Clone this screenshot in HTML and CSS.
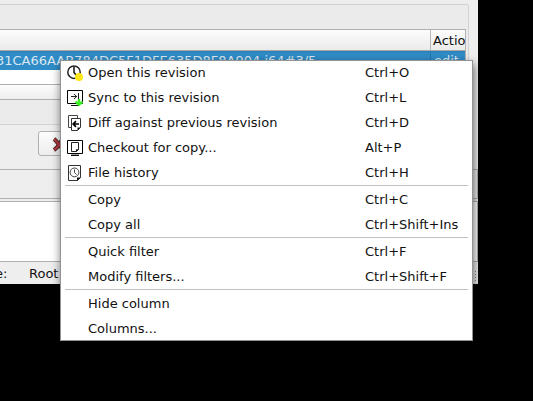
FILE: index.html
```
<!DOCTYPE html>
<html lang="en">
<head>
<meta charset="utf-8">
<title>Revisions</title>
<link rel="stylesheet" href="styles.css">
</head>
<body>
<div class="window">
  <section class="group">
    <div class="table">
      <div class="row header"><div class="cell file"></div><div class="cell action">Actio</div></div>
      <div class="row selected"><div class="cell file">31CA66AAB784DC5F1DFE635D8F8A904.i64#3/5</div><div class="cell action">edit</div></div>
      <div class="blank"></div>
      <div class="scrollbar"></div>
    </div>
  </section>
  <div class="buttons">
    <button class="button"><svg width="14" height="16" viewBox="0 0 14 16"><path d="M2 2C5 4 7 9 12 13M11 2C8 5 7 10 2 13" fill="none" stroke="#402020" stroke-width="4"/><path d="M2 2C5 4 7 9 12 13M11 2C8 5 7 10 2 13" fill="none" stroke="#b83b40" stroke-width="2.4"/></svg></button>
  </div>
  <div class="tabs"></div>
  <div class="log"></div>
  <footer class="status"><span>e:</span><span class="root">Root</span><i class="grip"></i></footer>
</div>
<nav class="menu">
  <div class="item"><svg class="icon" viewBox="0 0 16 16"><circle cx="7" cy="7.2" r="6.2" fill="#fff" stroke="#222" stroke-width="1.5"/><path d="M7 2V7.5L9.5 10.5" fill="none" stroke="#111" stroke-width="1.5"/><circle cx="12" cy="12" r="4" fill="#ffe714"/></svg><span>Open this revision</span><kbd>Ctrl+O</kbd></div>
  <div class="item"><svg class="icon" viewBox="0 0 16 16"><path d="M.5.5h15v13H.5z" fill="#fff" stroke="#000"/><path d="M4 15.5h8" stroke="#111"/><path d="M4 6.5h6M7 4l2.7 2.5L7 9M11.5 3v7" fill="none" stroke="#222"/><path d="M12 9v6M8.5 11.5l3.5 3.3 3.5-3.3" fill="none" stroke="#37ef20" stroke-width="2.4"/></svg><span>Sync to this revision</span><kbd>Ctrl+L</kbd></div>
  <div class="item"><svg class="icon" viewBox="0 0 16 16"><path d="M1.5.5h9v12h-9z" fill="#fff" stroke="#444"/><path d="M4.5 3.5h9v9l-3 3h-6z" fill="#fff" stroke="#333"/><path d="M10.5 15.5v-3h3z" fill="#111"/><path d="M12 9H6.5M9 6.2L6.2 9 9 11.8" fill="none" stroke="#000" stroke-width="1.7"/></svg><span>Diff against previous revision</span><kbd>Ctrl+D</kbd></div>
  <div class="item"><svg class="icon" viewBox="0 0 16 16"><path d="M.5.5h15v13H.5z" fill="#fff" stroke="#000"/><path d="M4 15.3h8" stroke="#111" stroke-width="1.4"/><path d="M4.5 2.5h7v7l-2 2h-5z" fill="#fff" stroke="#222"/><path d="M9 12V9.3h3z" fill="#111"/></svg><span>Checkout for copy...</span><kbd>Alt+P</kbd></div>
  <div class="item"><svg class="icon" viewBox="0 0 16 16"><path d="M1.5.5h12v12l-3 3h-9z" fill="#fff" stroke="#333"/><path d="M10 16v-3.6h4z" fill="#111"/><circle cx="7.5" cy="7.4" r="4.4" fill="#fff" stroke="#444"/><path d="M7.5 4.5v3l2 2" fill="none" stroke="#444"/></svg><span>File history</span><kbd>Ctrl+H</kbd></div>
  <hr>
  <div class="item"><span>Copy</span><kbd>Ctrl+C</kbd></div>
  <div class="item"><span>Copy all</span><kbd>Ctrl+Shift+Ins</kbd></div>
  <hr>
  <div class="item"><span>Quick filter</span><kbd>Ctrl+F</kbd></div>
  <div class="item"><span>Modify filters...</span><kbd>Ctrl+Shift+F</kbd></div>
  <hr>
  <div class="item"><span>Hide column</span></div>
  <div class="item"><span>Columns...</span></div>
</nav>
</body>
</html>
```
FILE: styles.css
```
* { box-sizing: border-box; }
body {
  margin: 0;
  height: 401px;
  overflow: hidden;
  background: #000;
  color: #111;
  font: 13px "DejaVu Sans", sans-serif;
}
.window {
  display: flex;
  flex-direction: column;
  width: 478px;
  height: 284px;
  overflow: hidden;
  background: #eee;
}
.window > * { flex: none; }
.group {
  height: 121px;
  margin: 4px 9px 0 0;
  padding: 24px 2px 0 0;
  border: 1px solid #d2d2d2;
  border-left: 0;
  border-radius: 0 2px 2px 0;
  background: #ebebeb;
}
.table {
  height: 71px;
  border: 1px solid #b0b0b0;
  border-left: 0;
  background: #fff;
}
.row { display: flex; }
.header {
  height: 21px;
  border-bottom: 1px solid #aaa;
  background: linear-gradient(#fcfcfc, #ebebeb);
}
.cell { overflow: hidden; white-space: nowrap; }
.file { width: 431px; flex: none; border-right: 1px solid #b8b8b8; }
.action { flex: 1; padding-left: 2px; line-height: 22px; }
.selected {
  height: 19px;
  background: linear-gradient(#2b7db4, #308cc6 2px);
  color: #d9e7f1;
  line-height: 19px;
}
.selected .file { text-indent: -4px; border-color: #2777aa; }
.selected .action { padding-left: 3px; line-height: 19px; }
.blank { height: 15px; border-bottom: 1px solid #b0b0b0; }
.scrollbar { height: 14px; background: linear-gradient(#fcfcfc, #eee); }
.buttons { height: 44px; padding: 6px 0 0 38px; }
.button {
  display: block;
  width: 60px;
  height: 25px;
  padding: 3px 0 0 13px;
  border: 1px solid #b0b0b0;
  border-radius: 3px;
  background: linear-gradient(#fdfdfd, #ededed);
  text-align: left;
}
.button svg { display: block; }
.tabs {
  height: 30px;
  border: 1px solid #b0b0b0;
  border-left: 0;
}
.log {
  height: 61px;
  margin-top: 2px;
  border: 1px solid #b0b0b0;
  border-left: 0;
  background: #fff;
}
.status {
  display: flex;
  height: 22px;
  line-height: 23px;
}
.status span:first-child { margin-left: -1px; }
.root { margin-left: 16px; }
.status .root { margin-left: 21.6px; }
.status span:first-child { margin-left: -5px; }
.grip {
  width: 1px;
  height: 12px;
  margin: 9px 2px 0 auto;
  background: repeating-linear-gradient(#888 0 1px, transparent 1px 3px);
}
.menu {
  position: absolute;
  left: 60px;
  top: 60px;
  width: 413px;
  height: 281px;
  background: #fff;
  outline: 1px solid #939393;
  outline-offset: -1px;
  box-shadow: 1px 4px 9px rgba(0, 0, 0, .6);
}
.item {
  display: grid;
  grid-template-columns: 16px 277px 1fr;
  align-items: center;
  height: 25px;
  padding-left: 7px;
  line-height: 25px;
}
.item span { grid-column: 2; padding-left: 5px; }
.item kbd { padding-left: 5px; font: inherit; }
.icon { width: 16px; height: 16px; grid-column: 1; }
hr {
  height: 1px;
  margin: 0 5px 1px;
  border: 0;
  background: #c0c0c0;
}
```
